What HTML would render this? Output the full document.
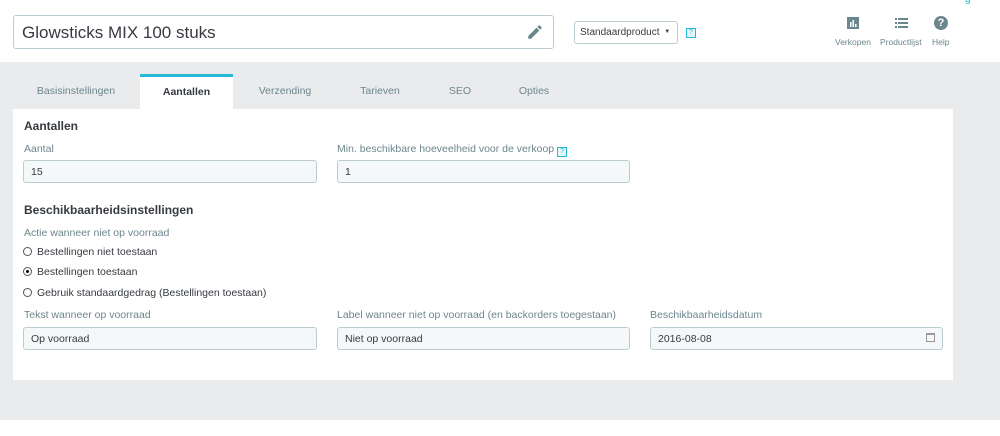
<!DOCTYPE html>
<html><head><meta charset="utf-8"><style>
*{box-sizing:border-box;margin:0;padding:0}
body{width:1000px;height:436px;background:#fff;font-family:"Liberation Sans",sans-serif;color:#363a41;position:relative;overflow:hidden}
.abs{position:absolute;white-space:nowrap}
.gray{left:0;top:62px;width:1000px;height:358px;background:#eaebed}
.title{left:13px;top:15px;width:541px;height:34px;border:1px solid #bbcdd2;border-radius:3px;background:#fff;font-size:17px;padding:7px 8px;color:#363a41}
.sel{left:574px;top:21px;width:104px;height:23px;border:1px solid #bbcdd2;border-radius:3px;font-size:10px;padding:5px 5px}
.help{width:10px;height:10px;border:1px solid #25b9d7;font-size:7px;color:#25b9d7;text-align:center;line-height:8px;background:#e6f7fb}
.ic{font-size:8.5px;color:#6c868e;text-align:center}
.tab{top:74px;height:35px;font-size:10.5px;color:#6c868e;line-height:35px;text-align:center}
.active{background:#fff;border-top:3px solid #25b9d7;color:#363a41;font-weight:bold;line-height:31px}
.panel{left:13px;top:109px;width:940px;height:271px;background:#fff}
.lbl{font-size:10.5px;color:#6c868e}
h3{position:absolute;font-size:12px;font-weight:bold;color:#363a41}
.inp{height:23px;border:1px solid #bbcdd2;border-radius:3px;background:#f5f8f9;font-size:10.5px;padding:5px 7px}
.rad{font-size:10.5px;color:#363a41}
.rad i{display:inline-block;width:9px;height:9px;border:1px solid #555;border-radius:50%;margin-right:5px;vertical-align:-1px;position:relative}
</style></head><body>
<div class="abs gray"></div>
<div class="abs title">Glowsticks MIX 100 stuks
<svg class="abs" style="right:9px;top:7px" width="18" height="18" viewBox="0 0 24 24"><path d="M3 17.25V21h3.75L17.8 9.94l-3.75-3.75L3 17.25zM20.7 7.04a1 1 0 000-1.41l-2.34-2.34a1 1 0 00-1.41 0l-1.83 1.83 3.75 3.75 1.83-1.83z" fill="#6c868e"/></svg></div>
<div class="abs sel">Standaardproduct <span style="font-size:6px;margin-left:2px;vertical-align:2px">▼</span></div>
<div class="abs help" style="left:686px;top:28px">?</div>
<div class="abs" style="left:965px;top:-6px;color:#25b9d7;font-size:10px">g</div>
<svg class="abs" style="left:847px;top:17px" width="12" height="12"><rect width="12" height="12" fill="#6c868e"/><rect x="3" y="5" width="1.5" height="5" fill="#fff"/><rect x="5.5" y="3" width="1.5" height="7" fill="#fff"/><rect x="8" y="7" width="1.5" height="3" fill="#fff"/></svg>
<svg class="abs" style="left:895px;top:18px" width="13" height="10"><g fill="#6c868e"><rect y="0" width="2" height="2"/><rect x="3" y="0" width="10" height="2"/><rect y="4" width="2" height="2"/><rect x="3" y="4" width="10" height="2"/><rect y="8" width="2" height="2"/><rect x="3" y="8" width="10" height="2"/></g></svg>
<div class="abs" style="left:934px;top:16px;width:14px;height:14px;border-radius:50%;background:#6c868e;color:#fff;font-size:11px;font-weight:bold;text-align:center;line-height:14px">?</div>
<div class="abs ic" style="left:835px;top:37px">Verkopen</div>
<div class="abs ic" style="left:880px;top:37px">Productlijst</div>
<div class="abs ic" style="left:932px;top:37px">Help</div>
<div class="abs tab" style="left:13px;width:126px">Basisinstellingen</div>
<div class="abs tab active" style="left:140px;width:93px">Aantallen</div>
<div class="abs tab" style="left:235px;width:100px">Verzending</div>
<div class="abs tab" style="left:340px;width:80px">Tarieven</div>
<div class="abs tab" style="left:430px;width:60px">SEO</div>
<div class="abs tab" style="left:500px;width:68px">Opties</div>
<div class="abs panel"></div>
<h3 style="left:24px;top:119px">Aantallen</h3>
<div class="abs lbl" style="left:24px;top:143px">Aantal</div>
<div class="abs lbl" style="left:337px;top:143px">Min. beschikbare hoeveelheid voor de verkoop <span class="help" style="display:inline-block;vertical-align:-1px">?</span></div>
<div class="abs inp" style="left:23px;top:160px;width:294px">15</div>
<div class="abs inp" style="left:337px;top:160px;width:293px">1</div>
<h3 style="left:24px;top:203px">Beschikbaarheidsinstellingen</h3>
<div class="abs lbl" style="left:24px;top:227px">Actie wanneer niet op voorraad</div>
<div class="abs rad" style="left:23px;top:246px"><i></i>Bestellingen niet toestaan</div>
<div class="abs rad" style="left:23px;top:266px"><i><span style="position:absolute;left:2px;top:2px;width:3px;height:3px;border-radius:50%;background:#000"></span></i>Bestellingen toestaan</div>
<div class="abs rad" style="left:23px;top:287px"><i></i>Gebruik standaardgedrag (Bestellingen toestaan)</div>
<div class="abs lbl" style="left:24px;top:309px">Tekst wanneer op voorraad</div>
<div class="abs lbl" style="left:337px;top:309px">Label wanneer niet op voorraad (en backorders toegestaan)</div>
<div class="abs lbl" style="left:650px;top:309px">Beschikbaarheidsdatum</div>
<div class="abs inp" style="left:23px;top:327px;width:294px">Op voorraad</div>
<div class="abs inp" style="left:337px;top:327px;width:293px">Niet op voorraad</div>
<div class="abs inp" style="left:650px;top:327px;width:293px">2016-08-08<span style="position:absolute;right:7px;top:5px;width:9px;height:9px;border:1px solid #999;border-top-width:2px"></span></div>
</body></html>
